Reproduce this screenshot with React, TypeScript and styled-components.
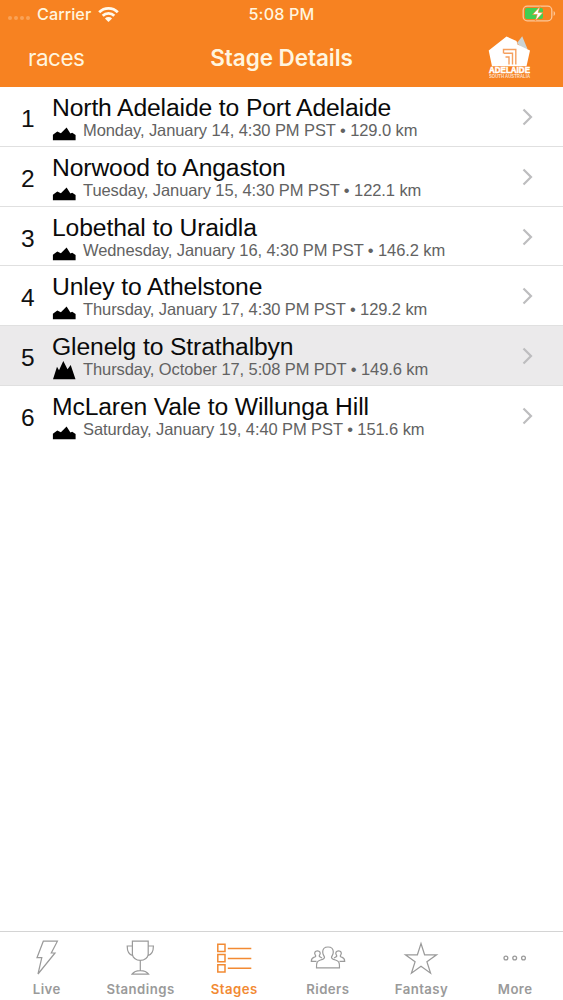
import React from "react";
import styled, { createGlobalStyle } from "styled-components";

const GlobalStyle = createGlobalStyle`
  * { box-sizing: border-box; }
  body { margin: 0; background: #fff; }
`;

const Screen = styled.div`
  width: 563px;
  height: 1000px;
  display: flex;
  flex-direction: column;
  overflow: hidden;
  background: #fff;
  font-family: "Liberation Sans", Arial, sans-serif;
  white-space: nowrap;
`;

const Header = styled.header`
  height: 87px;
  flex: none;
  background: #f78221;
  color: #fff5df;
  font-family: Inter, sans-serif;
`;

const StatusBar = styled.div`
  height: 28px;
  display: grid;
  grid-template-columns: 1fr auto 1fr;
  align-items: center;
  padding: 0 7px 0 8px;
  font-size: 16.2px;
  font-weight: 500;
  line-height: 27px;
`;

const Carrier = styled.div`
  display: flex;
  align-items: center;
  gap: 7px;
  letter-spacing: 0.05px;
`;

const Signal = styled.div`
  display: flex;
  gap: 2px;
  padding-top: 8px;
  i {
    width: 4px;
    height: 4px;
    border-radius: 50%;
    background: #f9a257;
  }
`;

const Clock = styled.div`
  letter-spacing: 0.15px;
  padding-right: 1px;
`;

const BatterySlot = styled.div`
  display: flex;
  justify-content: flex-end;
`;

const NavBar = styled.div`
  height: 59px;
  display: grid;
  grid-template-columns: 1fr auto 1fr;
  padding: 0 28px;
  line-height: 59px;
`;

const Back = styled.div`
  font-size: 22.5px;
  letter-spacing: -0.5px;
`;

const NavTitle = styled.div`
  font-size: 22.5px;
  font-weight: 600;
  letter-spacing: -0.06px;
`;

const LogoSlot = styled.div`
  display: flex;
  justify-content: flex-end;
  padding-top: 7px;
  svg { display: block; }
`;

const List = styled.main`
  flex: 1;
`;

const Row = styled.div<{ $active?: boolean; $last?: boolean }>`
  height: 59.8px;
  display: flex;
  padding-right: 28px;
  background: ${(p) => (p.$active ? "#ebeaeb" : "transparent")};
  border-bottom: 1px solid ${(p) => (p.$last ? "transparent" : "#e0e0e0")};
`;

const Num = styled.div`
  width: 52px;
  padding: 5px 0 0 21px;
  font-size: 24.5px;
  line-height: 54px;
  color: #111;
`;

const Info = styled.div`
  flex: 1;
`;

const Title = styled.div`
  padding-top: 7px;
  font-size: 24.7px;
  line-height: 28px;
  letter-spacing: -0.13px;
  color: #0a0a0a;
`;

const Meta = styled.div`
  display: flex;
  height: 20px;
  gap: 7px;
  margin-top: -1px;
  font-size: 16.5px;
  line-height: 18px;
  letter-spacing: -0.09px;
  color: #626262;
`;

const Chevron = styled.svg`
  flex: none;
  margin-top: 21px;
`;

const TabBar = styled.nav`
  height: 69px;
  flex: none;
  display: grid;
  grid-template-columns: repeat(6, 1fr);
  padding-right: 1px;
  border-top: 1px solid #d4d4d4;
  font-family: Inter, sans-serif;
`;

const Tab = styled.div<{ $active?: boolean }>`
  display: flex;
  flex-direction: column;
  align-items: center;
  color: ${(p) => (p.$active ? "#f28a33" : "#9a9a9a")};
  font-size: 13.2px;
  font-weight: 600;
  line-height: 16px;
  letter-spacing: 0.45px;
  svg { margin: 6px 0 3px; }
`;

const Elevation = ({ steep }: { steep?: boolean }) => (
  <svg width="24" height="20" viewBox="0 0 24 20">
    <path
      fill="#000"
      d={
        steep
          ? "M1 19.3 5 6.8l2 3.4L11.300 1l4.200 8.300 3.200-4.300L23.500 19.300Z"
          : "M.9 19.3v-5.500L5.300 10.600 8.900 12.200 14.600 6.500 18.400 12.600l1.800-.8 3.400 2.200v5.300Z"
      }
    />
  </svg>
);

const Wifi = () => (
  <svg width="21" height="17" viewBox="0 0 21 17">
    <g fill="none" stroke="#fff9ec" strokeWidth="2.8">
      <path d="M1.2 6.2a13.2 13.2 0 0 1 18.6 0M4.7 9.8a8.2 8.2 0 0 1 11.6 0" />
    </g>
    <path d="M6.9 12.4a5.1 5.1 0 0 1 7.2 0L10.500 16Z" fill="#fff9ec" />
  </svg>
);

const Battery = () => (
  <svg width="34" height="18" viewBox="0 0 34 18">
    <rect x="1.2" y="1.2" width="28.6" height="14.6" rx="4" fill="none" stroke="#fdc799" strokeWidth="1.3" />
    <path d="M31.6 6v5c2-1 2-4 0-5" fill="#fdc799" />
    <rect x="3" y="3" width="18" height="11" rx="2" fill="#43ce52" />
    <path d="m18 1.500-7.500 8h4.700l-2 6.500 7.800-8.600h-4.800Z" fill="#fff" stroke="#f78221" strokeWidth=".6" />
  </svg>
);

const LogoText = styled.text`
  font-family: "Liberation Sans", sans-serif;
  font-weight: 700;
  fill: #fff;
`;

const Logo = () => (
  <svg width="48" height="48" viewBox="0 0 48 48">
    <path d="m30 8 5.200-6.800L40.500 14l-4 1Z" fill="#cbd3d3" />
    <path d="M1.700 15.500 19.500 1.500 29.500 6l1 3.500 12.500 6L39.500 31.300H5Z" fill="#fff" />
    <path d="M16.500 18.500v-4h12.300v15M17 18.300h8.500v11.200M18.500 22h3.500v7.500" fill="none" stroke="#f5a05f" strokeWidth="1.400" />
    <LogoText x="2" y="38.300" fontSize="8.600" textLength="41" lengthAdjust="spacingAndGlyphs" stroke="#fff" strokeWidth=".5">ADELAIDE</LogoText>
    <LogoText x="2" y="43.300" fontSize="4.800" textLength="41" lengthAdjust="spacingAndGlyphs" opacity=".75">SOUTH AUSTRALIA</LogoText>
  </svg>
);

const TabIcon = ({ children }: { children: React.ReactNode }) => (
  <svg width="40" height="40" viewBox="0 0 40 40" fill="none" stroke="currentColor" strokeWidth="1.2">
    {children}
  </svg>
);

const stages = [
  ["North Adelaide to Port Adelaide", "Monday, January 14, 4:30 PM PST • 129.0 km"],
  ["Norwood to Angaston", "Tuesday, January 15, 4:30 PM PST • 122.1 km"],
  ["Lobethal to Uraidla", "Wednesday, January 16, 4:30 PM PST • 146.2 km"],
  ["Unley to Athelstone", "Thursday, January 17, 4:30 PM PST • 129.2 km"],
  ["Glenelg to Strathalbyn", "Thursday, October 17, 5:08 PM PDT • 149.6 km"],
  ["McLaren Vale to Willunga Hill", "Saturday, January 19, 4:40 PM PST • 151.6 km"],
];

const tabs: { label: string; icon: React.ReactNode }[] = [
  { label: "Live", icon: <path d="M16.300 3.200h14.100L24.300 15h3.700L11 36l3.800-16.300H10Z" /> },
  {
    label: "Standings",
    icon: (
      <path d="M12.400 3.200h15.800v13c0 3-3.500 6.200-7.900 6.200s-7.900-3.200-7.900-6.200ZM12.400 8H7.200c0 5 1 8.700 5.700 9.700M28.200 8h5.200c0 5-1 8.700-5.700 9.700M20.300 22.400v10.200M12 36.200c1.500-2.200 4-3.600 8.300-3.600s6.800 1.400 8.300 3.600Z" />
    ),
  },
  {
    label: "Stages",
    icon: (
      <path
        strokeWidth="1.5"
        d="M3.800 6.300h7.200v7.200H3.800ZM3.800 16.500h7.200v7.200H3.800ZM3.800 26.700h7.200v7.200H3.800ZM13.800 10.600h23.500M13.800 20.600h23.500M13.800 30.200h23.500"
      />
    ),
  },
  {
    label: "Riders",
    icon: (
      <>
        <path d="M8.500 29.800c-.2-5 .5-6.600 3.500-7.600 3-1 4.500-1.400 4.500-2.800 0-1.200-1.800-2.400-1.800-5.400 0-3 2-5 5.300-5s5.300 2 5.300 5c0 3-1.800 4.200-1.800 5.400 0 1.400 1.500 1.800 4.500 2.800 3 1 3.700 2.600 3.500 7.600Z" />
        <path d="M8.500 23.400H3.300c0-2.500.7-3.600 3-4.200 1.700-.4 1.700-1.200.9-2.400-1.200-1.800-.2-4 2.200-4 2.500 0 3.500 2.200 2.300 4-.8 1.200-.7 2 1 2.400l1.300.8M31.500 23.400h5.200c0-2.500-.7-3.600-3-4.200-1.700-.4-1.700-1.200-.9-2.400 1.200-1.800.2-4-2.200-4-2.500 0-3.500 2.200-2.300 4 .8 1.200.7 2-1 2.400l-1.300.8" />
      </>
    ),
  },
  { label: "Fantasy", icon: <path d="m20 5.500 3.600 11.300h12l-9.700 7 3.700 11.400L20 28.200l-9.600 7 3.700-11.400-9.700-7h12Z" /> },
  {
    label: "More",
    icon: (
      <g strokeWidth="1.3">
        <circle cx="10.900" cy="20" r="1.900" />
        <circle cx="19.700" cy="20" r="1.900" />
        <circle cx="28.500" cy="20" r="1.900" />
      </g>
    ),
  },
];

export default function App() {
  return (
    <Screen>
      <GlobalStyle />
      <Header>
        <StatusBar>
          <Carrier>
            <Signal><i /><i /><i /><i /></Signal>
            <span>Carrier</span>
            <Wifi />
          </Carrier>
          <Clock>5:08 PM</Clock>
          <BatterySlot><Battery /></BatterySlot>
        </StatusBar>
        <NavBar>
          <Back>races</Back>
          <NavTitle>Stage Details</NavTitle>
          <LogoSlot><Logo /></LogoSlot>
        </NavBar>
      </Header>
      <List>
        {stages.map(([title, meta], i) => (
          <Row key={title} $active={i === 4} $last={i === 5}>
            <Num>{i + 1}</Num>
            <Info>
              <Title>{title}</Title>
              <Meta>
                <Elevation steep={i === 4} />
                <span>{meta}</span>
              </Meta>
            </Info>
            <Chevron width="14" height="18" viewBox="0 0 14 18">
              <path d="m2.500 1.500 7.500 7.500-7.500 7.500" fill="none" stroke="#bdbdbf" strokeWidth="2.200" />
            </Chevron>
          </Row>
        ))}
      </List>
      <TabBar>
        {tabs.map((t) => (
          <Tab key={t.label} $active={t.label === "Stages"}>
            <TabIcon>{t.icon}</TabIcon>
            {t.label}
          </Tab>
        ))}
      </TabBar>
    </Screen>
  );
}
